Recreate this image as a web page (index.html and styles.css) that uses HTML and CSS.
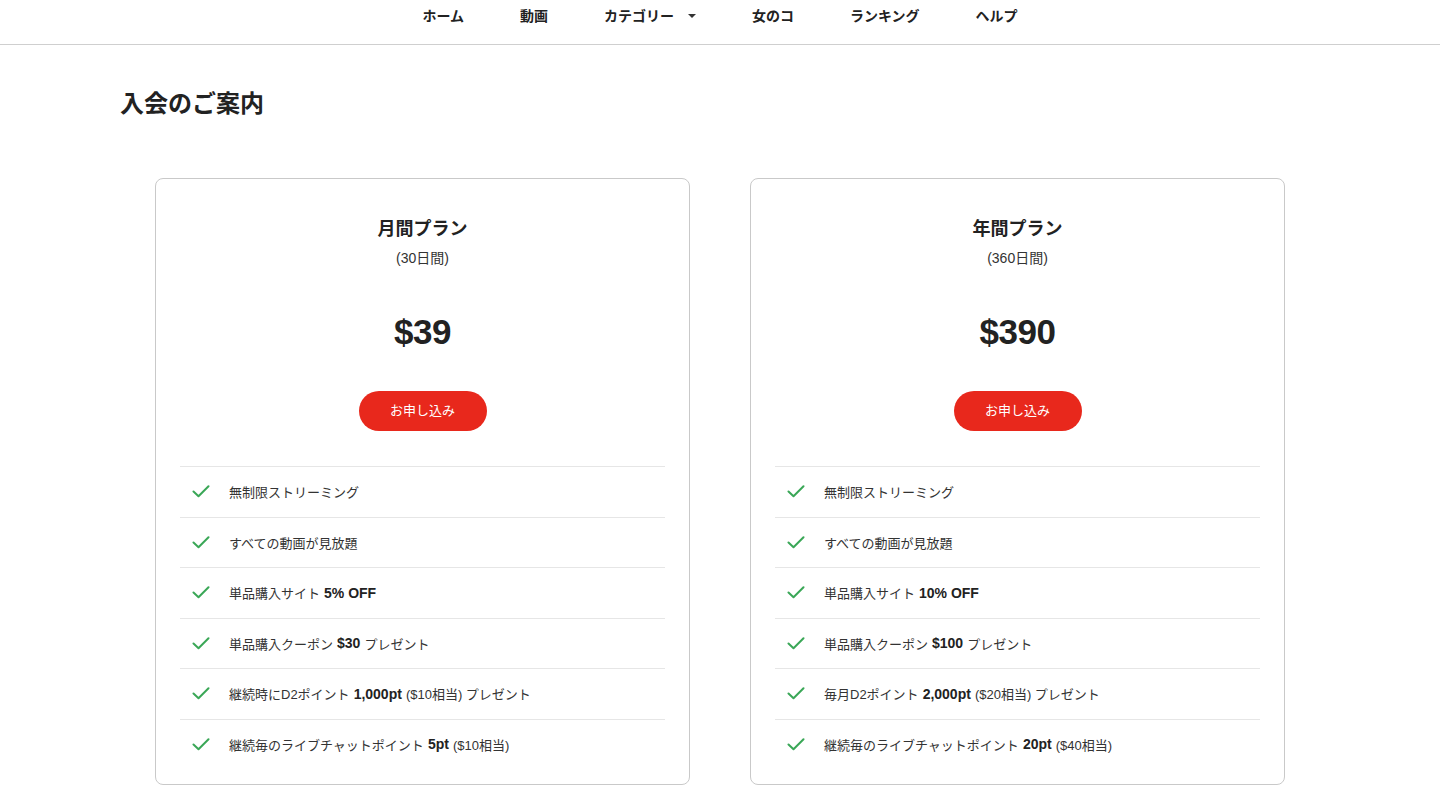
FILE: index.html
```html
<!DOCTYPE html>
<html lang="ja">
<head>
  <meta charset="UTF-8" />
  <meta name="viewport" content="width=device-width, initial-scale=1.0" />
  <title>入会のご案内</title>
  <link rel="stylesheet" href="styles.css">
</head>
<body>
  <nav class="topnav">
    <a href="#" class="nav-item">ホーム</a>
    <a href="#" class="nav-item">動画</a>
    <a href="#" class="nav-item">カテゴリー <span class="caret"></span></a>
    <a href="#" class="nav-item">女のコ</a>
    <a href="#" class="nav-item">ランキング</a>
    <a href="#" class="nav-item">ヘルプ</a>
  </nav>

  <main class="container">
    <h1 class="page-title">入会のご案内</h1>

    <div class="plans">
      <!-- 月間プラン -->
      <section class="plan">
        <h2 class="plan-name">月間プラン</h2>
        <p class="plan-term">(30日間)</p>
        <p class="plan-price">$39</p>
        <a href="#" class="btn-join">お申し込み</a>
        <ul class="features">
          <li><span class="check"></span>無制限ストリーミング</li>
          <li><span class="check"></span>すべての動画が見放題</li>
          <li><span class="check"></span>単品購入サイト <b>5% OFF</b></li>
          <li><span class="check"></span>単品購入クーポン <b>$30</b> プレゼント</li>
          <li><span class="check"></span>継続時にD2ポイント <b>1,000pt</b> ($10相当) プレゼント</li>
          <li><span class="check"></span>継続毎のライブチャットポイント <b>5pt</b> ($10相当)</li>
        </ul>
      </section>

      <!-- 年間プラン -->
      <section class="plan">
        <h2 class="plan-name">年間プラン</h2>
        <p class="plan-term">(360日間)</p>
        <p class="plan-price">$390</p>
        <a href="#" class="btn-join">お申し込み</a>
        <ul class="features">
          <li><span class="check"></span>無制限ストリーミング</li>
          <li><span class="check"></span>すべての動画が見放題</li>
          <li><span class="check"></span>単品購入サイト <b>10% OFF</b></li>
          <li><span class="check"></span>単品購入クーポン <b>$100</b> プレゼント</li>
          <li><span class="check"></span>毎月D2ポイント <b>2,000pt</b> ($20相当) プレゼント</li>
          <li><span class="check"></span>継続毎のライブチャットポイント <b>20pt</b> ($40相当)</li>
        </ul>
      </section>
    </div>
  </main>

  <script>
    // チェックアイコンを差し込む
    document.querySelectorAll('.check').forEach(function (el) {
      el.innerHTML = '<svg width="18" height="13" viewBox="0 0 18 13"><path d="M1.5 6.5 L6.5 11.2 L16.5 1.3" fill="none" stroke="#3aa757" stroke-width="2" stroke-linecap="round" stroke-linejoin="round"/></svg>';
    });
  </script>
</body>
</html>
```

FILE: styles.css
```css
body {
  font-family: 'Liberation Sans', 'Noto Sans CJK JP', sans-serif;
  color: #222;
  background-color: #fff;
  margin: 0;
  padding: 0;
}
a {
  color: inherit;
  text-decoration: none;
}
.topnav {
  height: 45px;
  box-sizing: border-box;
  border-bottom: 1px solid #cfcfcf;
  display: flex;
  justify-content: center;
  align-items: flex-start;
  padding-top: 6px;
}
.nav-item {
  font-size: 14px;
  font-weight: bold;
  line-height: 20px;
  padding: 0 28px;
  display: flex;
  align-items: center;
  gap: 8px;
}
.caret {
  width: 0;
  height: 0;
  border-left: 4px solid transparent;
  border-right: 4px solid transparent;
  border-top: 4px solid #333;
  margin-left: 6px;
}
.container {
  width: 1200px;
  margin: 0 auto;
}
.page-title {
  font-size: 24px;
  font-weight: bold;
  line-height: 32px;
  margin: 43px 0 0 0;
}
.plans {
  display: flex;
  gap: 60px;
  padding: 0 35px;
  margin-top: 58px;
}
.plan {
  flex: 1;
  border: 1px solid #c9c9c9;
  border-radius: 8px;
  padding: 37px 24px 15px;
  text-align: center;
}
.plan-name {
  font-size: 18px;
  font-weight: bold;
  line-height: 26px;
  margin: 0;
}
.plan-term {
  font-size: 14px;
  line-height: 20px;
  margin: 6px 0 0;
  color: #333;
}
.plan-price {
  font-size: 35px;
  font-weight: bold;
  line-height: 40px;
  margin: 44px 0 0;
  letter-spacing: -0.5px;
}
.btn-join {
  display: inline-block;
  width: 128px;
  height: 40px;
  line-height: 40px;
  margin-top: 39px;
  border-radius: 20px;
  background-color: #e8281c;
  color: #fff;
  font-size: 13px;
}
.features {
  list-style: none;
  margin: 35px 0 0;
  padding: 0;
  text-align: left;
}
.features li {
  height: 50.5px;
  box-sizing: border-box;
  border-top: 1px solid #e6e6e6;
  display: flex;
  align-items: center;
  padding-left: 12px;
  font-size: 13px;
  color: #333;
}
.features b {
  color: #222;
  margin: 0 4px;
  font-size: 14px;
}
.check {
  width: 18px;
  height: 13px;
  margin-right: 19px;
  display: flex;
}
```
